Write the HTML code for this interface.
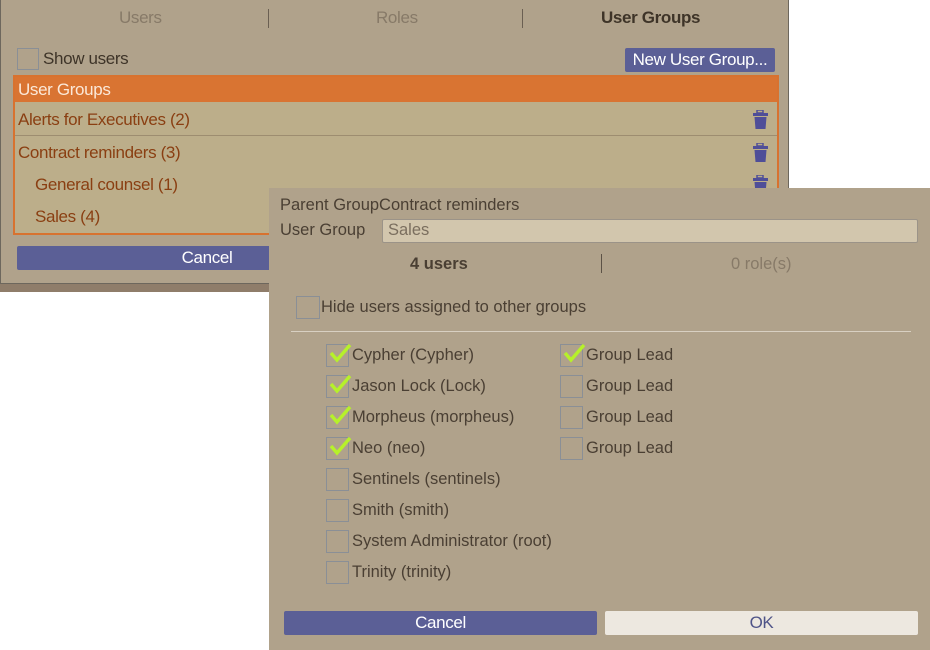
<!DOCTYPE html>
<html><head><style>
*{margin:0;padding:0;box-sizing:border-box}
body{width:930px;height:650px;background:#fff;position:relative;overflow:hidden;font-family:"Liberation Sans",sans-serif;}
.a{position:absolute;white-space:nowrap}
.n{font-family:"Liberation Sans",sans-serif;font-size:17px;letter-spacing:-0.35px}
.s{font-family:"Liberation Sans",sans-serif;font-size:16.5px;color:#4a3f33}
.cb{position:absolute;width:23px;height:23px;border:1px solid #8a8f96}
.ck{position:absolute;left:2px;top:-3px}
</style></head><body>
<div class="a" style="left:0;top:0;width:789px;height:292px;background:#8f7d6a"></div>
<div class="a" style="left:0;top:0;width:789px;height:284px;background:#b0a28b;border:1px solid #6d675d;border-top:none"></div>
<div class="a n" style="left:119px;top:8px;color:#877a68">Users</div>
<div class="a" style="left:268px;top:9px;width:1px;height:19px;background:#6a5f52"></div>
<div class="a n" style="left:376px;top:8px;color:#877a68">Roles</div>
<div class="a" style="left:522px;top:9px;width:1px;height:19px;background:#6a5f52"></div>
<div class="a n" style="left:601px;top:8px;color:#3e3428;font-weight:bold">User Groups</div>
<div class="cb" style="left:17px;top:48px;width:22px;height:22px"></div>
<div class="a n" style="left:43px;top:49px;color:#3e3428">Show users</div>
<div class="a n" style="left:625px;top:48px;width:150px;height:24px;background:#5b5f96;color:#fff;text-align:center;line-height:23px;border-radius:2px">New User Group...</div>
<div class="a" style="left:13px;top:75px;width:766px;height:160px;border:2px solid #d8722f;background:#bcae8a"></div>
<div class="a n" style="left:15px;top:77px;width:762px;height:25px;background:#d97432;color:#fbe8d8;padding-left:3px;line-height:25px">User Groups</div>
<div class="a" style="left:15px;top:135px;width:762px;height:1px;background:#9d8d70"></div>
<div class="a n" style="left:18px;top:110px;color:#8a3f12">Alerts for Executives (2)</div>
<div class="a n" style="left:18px;top:143px;color:#8a3f12">Contract reminders (3)</div>
<div class="a n" style="left:35px;top:175px;color:#8a3f12">General counsel (1)</div>
<div class="a n" style="left:35px;top:207px;color:#8a3f12">Sales (4)</div>
<svg class="a" style="left:753px;top:110px" width="15" height="19" viewBox="0 0 15 19"><rect x="4" y="0" width="6" height="3" fill="none" stroke="#4f4e98" stroke-width="1.5"/><rect x="0" y="3" width="15" height="3" fill="#4f4e98"/><path d="M1.5 7h12l-1 12h-10z" fill="#4f4e98"/></svg>
<svg class="a" style="left:753px;top:143px" width="15" height="19" viewBox="0 0 15 19"><rect x="4" y="0" width="6" height="3" fill="none" stroke="#4f4e98" stroke-width="1.5"/><rect x="0" y="3" width="15" height="3" fill="#4f4e98"/><path d="M1.5 7h12l-1 12h-10z" fill="#4f4e98"/></svg>
<svg class="a" style="left:753px;top:175px" width="15" height="19" viewBox="0 0 15 19"><rect x="4" y="0" width="6" height="3" fill="none" stroke="#4f4e98" stroke-width="1.5"/><rect x="0" y="3" width="15" height="3" fill="#4f4e98"/><path d="M1.5 7h12l-1 12h-10z" fill="#4f4e98"/></svg>
<div class="a n" style="left:17px;top:246px;width:380px;height:24px;background:#5b5f96;color:#fff;text-align:center;line-height:23px;border-radius:2px">Cancel</div>

<div class="a" style="left:269px;top:188px;width:661px;height:462px;background:#b0a28b"></div>
<div class="a s" style="left:280px;top:196px">Parent GroupContract reminders</div>
<div class="a s" style="left:280px;top:221px">User Group</div>
<div class="a s" style="left:382px;top:219px;width:536px;height:24px;background:#d2c6ad;border:1px solid #9b9388;border-radius:2px;padding-left:5px;line-height:21px;color:#7a6e5e">Sales</div>
<div class="a s" style="left:410px;top:255px;font-weight:bold">4 users</div>
<div class="a" style="left:601px;top:254px;width:1px;height:19px;background:#5c5246"></div>
<div class="a s" style="left:731px;top:255px;color:#877a68">0 role(s)</div>
<div class="cb" style="left:296px;top:296px;width:24px;height:23px"></div>
<div class="a s" style="left:321px;top:298px">Hide users assigned to other groups</div>
<div class="a" style="left:291px;top:331px;width:620px;height:1px;background:#d8d0c2"></div>

<div class="cb" style="left:326px;top:344px"><svg class="ck" width="24" height="22" viewBox="0 0 24 22"><path d="M2 11l6 7L21 3" fill="none" stroke="#b6f12a" stroke-width="3.5"/></svg></div>
<div class="a s" style="left:352px;top:346px">Cypher (Cypher)</div>
<div class="cb" style="left:560px;top:344px"><svg class="ck" width="24" height="22" viewBox="0 0 24 22"><path d="M2 11l6 7L21 3" fill="none" stroke="#b6f12a" stroke-width="3.5"/></svg></div>
<div class="a s" style="left:586px;top:346px">Group Lead</div>
<div class="cb" style="left:326px;top:375px"><svg class="ck" width="24" height="22" viewBox="0 0 24 22"><path d="M2 11l6 7L21 3" fill="none" stroke="#b6f12a" stroke-width="3.5"/></svg></div>
<div class="a s" style="left:352px;top:377px">Jason Lock (Lock)</div>
<div class="cb" style="left:560px;top:375px"></div>
<div class="a s" style="left:586px;top:377px">Group Lead</div>
<div class="cb" style="left:326px;top:406px"><svg class="ck" width="24" height="22" viewBox="0 0 24 22"><path d="M2 11l6 7L21 3" fill="none" stroke="#b6f12a" stroke-width="3.5"/></svg></div>
<div class="a s" style="left:352px;top:408px">Morpheus (morpheus)</div>
<div class="cb" style="left:560px;top:406px"></div>
<div class="a s" style="left:586px;top:408px">Group Lead</div>
<div class="cb" style="left:326px;top:437px"><svg class="ck" width="24" height="22" viewBox="0 0 24 22"><path d="M2 11l6 7L21 3" fill="none" stroke="#b6f12a" stroke-width="3.5"/></svg></div>
<div class="a s" style="left:352px;top:439px">Neo (neo)</div>
<div class="cb" style="left:560px;top:437px"></div>
<div class="a s" style="left:586px;top:439px">Group Lead</div>
<div class="cb" style="left:326px;top:468px"></div>
<div class="a s" style="left:352px;top:470px">Sentinels (sentinels)</div>
<div class="cb" style="left:326px;top:499px"></div>
<div class="a s" style="left:352px;top:501px">Smith (smith)</div>
<div class="cb" style="left:326px;top:530px"></div>
<div class="a s" style="left:352px;top:532px">System Administrator (root)</div>
<div class="cb" style="left:326px;top:561px"></div>
<div class="a s" style="left:352px;top:563px">Trinity (trinity)</div>

<div class="a n" style="left:284px;top:611px;width:313px;height:24px;background:#5b5f96;color:#fff;text-align:center;line-height:23px;border-radius:2px">Cancel</div>
<div class="a n" style="left:605px;top:611px;width:313px;height:24px;background:#ede8e0;color:#4f5488;text-align:center;line-height:23px;border-radius:2px">OK</div>
</body></html>
